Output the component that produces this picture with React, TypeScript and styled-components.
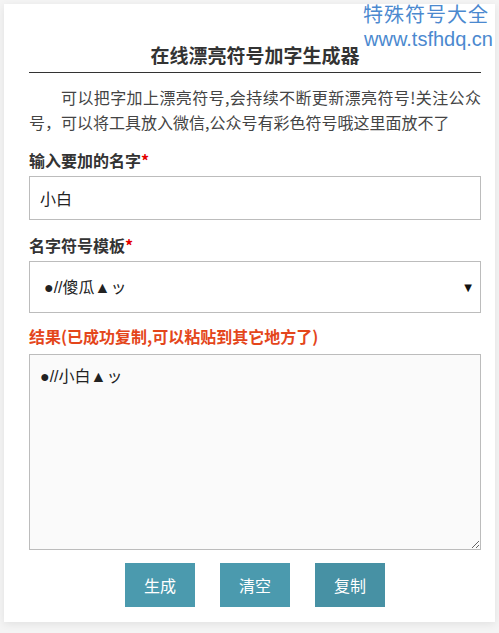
import React, { useState } from 'react'
import styled, { createGlobalStyle } from 'styled-components'

const GlobalStyle = createGlobalStyle`
  html, body {
    margin: 0;
    padding: 0;
    background: #f4f4f4;
    font-family: "Noto Sans CJK SC", "Noto Sans", sans-serif;
    color: #333;
  }
  * { box-sizing: border-box; }
`

const Page = styled.div`
  position: relative;
  padding: 4px 4px 11px;
`

const Watermark = styled.div`
  position: absolute;
  top: 2px;
  right: 6px;
  text-align: right;
  color: #4b89cf;
  line-height: 1;
  pointer-events: none;
`

const MarkTitle = styled.div`
  font-family: "Noto Sans CJK SC", sans-serif;
  font-size: 20px;
  line-height: 24px;
  letter-spacing: 1px;
  margin-right: 4px;
`

const MarkUrl = styled.div`
  font-family: "Liberation Sans", Arial, sans-serif;
  font-size: 20px;
  line-height: 24px;
  margin-top: 1px;
`

const Card = styled.div`
  background: #fff;
  box-shadow: 0 2px 8px rgba(0, 0, 0, 0.08);
  padding: 35px 14px 15px 25px;
`

const Title = styled.h1`
  margin: 0;
  font-size: 19px;
  line-height: 28px;
  font-weight: bold;
  text-align: center;
  color: #333;
  border-bottom: 1px solid #333;
  padding: 2px 0 3px;
`

const Intro = styled.p`
  margin: 12px 0 0;
  font-size: 16px;
  line-height: 25px;
  text-indent: 2em;
  text-align: justify;
  color: #444;
`

const Label = styled.div<{ $tone?: 'alert'; $top: number }>`
  margin-top: ${p => p.$top}px;
  font-size: 16px;
  line-height: 24px;
  font-weight: bold;
  color: ${p => (p.$tone === 'alert' ? '#e4461b' : '#333')};
`

const Star = styled.span`
  color: #e30000;
`

const fieldFont = `"Liberation Sans", "Noto Sans CJK SC", sans-serif`

const TextInput = styled.input`
  display: block;
  width: 100%;
  height: 44px;
  margin-top: 4px;
  padding: 0 10px;
  border: 1px solid #bcbcbc;
  border-radius: 0;
  font-family: ${fieldFont};
  font-size: 16px;
  color: #222;
  outline: none;
`

const SelectWrap = styled.div`
  position: relative;
  margin-top: 4px;
  &::after {
    content: '▼';
    position: absolute;
    right: 9px;
    top: 50%;
    transform: translateY(-50%);
    font-family: "DejaVu Sans", sans-serif;
    font-size: 10px;
    color: #111;
    pointer-events: none;
  }
`

const Select = styled.select`
  display: block;
  width: 100%;
  height: 52px;
  padding: 0 30px 0 14px;
  border: 1px solid #bcbcbc;
  border-radius: 0;
  background: #fff;
  appearance: none;
  font-family: ${fieldFont};
  font-size: 16px;
  color: #222;
  outline: none;
`

const Result = styled.textarea`
  display: block;
  width: 100%;
  height: 196px;
  margin-top: 6px;
  padding: 10px 10px;
  border: 1px solid #bcbcbc;
  border-radius: 0;
  background: #fafafa;
  font-family: ${fieldFont};
  font-size: 16px;
  line-height: 24px;
  color: #222;
  outline: none;
`

const Actions = styled.div`
  display: flex;
  justify-content: center;
  gap: 25px;
  margin-top: 13px;
`

const ActionButton = styled.button<{ $active?: boolean }>`
  width: 70px;
  height: 44px;
  border: none;
  border-radius: 0;
  background: ${p => (p.$active ? '#4791a4' : '#4b9aae')};
  color: #fff;
  font-family: "Noto Sans CJK SC", sans-serif;
  font-size: 16px;
  cursor: pointer;
`

const templates = ['●//傻瓜▲ッ', '★傻瓜★', '♥傻瓜♥']

export default function App() {
  const [name, setName] = useState('小白')
  const [tpl, setTpl] = useState(templates[0])
  const [result, setResult] = useState('●//小白▲ッ')

  const build = () => setResult(tpl.replace('傻瓜', name))

  return (
    <Page>
      <GlobalStyle />
      <Card>
        <Title>在线漂亮符号加字生成器</Title>
        <Intro>
          可以把字加上漂亮符号,会持续不断更新漂亮符号!关注公众号，可以将工具放入微信,公众号有彩色符号哦这里面放不了
        </Intro>
        <Label $top={13}>
          输入要加的名字<Star>*</Star>
        </Label>
        <TextInput value={name} onChange={e => setName(e.target.value)} />
        <Label $top={13}>
          名字符号模板<Star>*</Star>
        </Label>
        <SelectWrap>
          <Select value={tpl} onChange={e => setTpl(e.target.value)}>
            {templates.map(t => (
              <option key={t} value={t}>{t}</option>
            ))}
          </Select>
        </SelectWrap>
        <Label $top={11} $tone="alert">结果(已成功复制,可以粘贴到其它地方了)</Label>
        <Result value={result} onChange={e => setResult(e.target.value)} />
        <Actions>
          <ActionButton onClick={build}>生成</ActionButton>
          <ActionButton onClick={() => { setName(''); setResult('') }}>清空</ActionButton>
          <ActionButton $active onClick={() => navigator.clipboard?.writeText(result)}>复制</ActionButton>
        </Actions>
      </Card>
      <Watermark>
        <MarkTitle>特殊符号大全</MarkTitle>
        <MarkUrl>www.tsfhdq.cn</MarkUrl>
      </Watermark>
    </Page>
  )
}
